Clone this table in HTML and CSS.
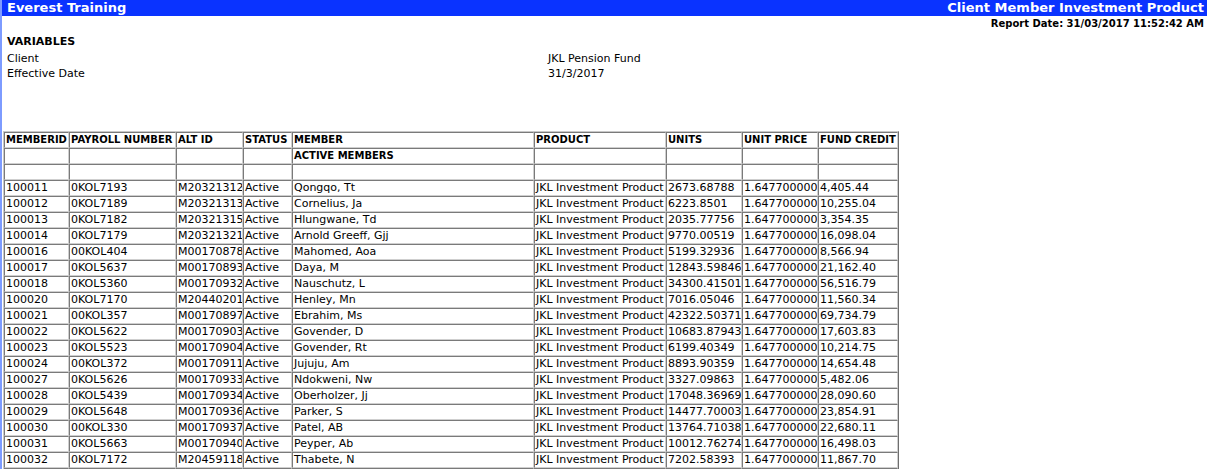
FILE: index.html
```html
<!DOCTYPE html>
<html>
<head>
<meta charset="utf-8">
<title>Client Member Investment Product</title>
<link rel="stylesheet" href="styles.css">
</head>
<body>
<div class="page">
  <div class="titlebar">
    <span class="title-left">Everest Training</span>
    <span class="title-right">Client Member Investment Product</span>
  </div>
  <div class="report-date">Report Date: 31/03/2017 11:52:42 AM</div>
  <div class="variables">
    <div class="var-head">VARIABLES</div>
    <div class="var-row"><span class="var-name">Client</span><span class="var-val">JKL Pension Fund</span></div>
    <div class="var-row"><span class="var-name">Effective Date</span><span class="var-val">31/3/2017</span></div>
  </div>
  <table class="grid">
    <thead>
      <tr class="head">
        <td class="c1">MEMBERID</td><td class="c2">PAYROLL NUMBER</td><td class="c3">ALT ID</td><td class="c4">STATUS</td><td class="c5">MEMBER</td><td class="c6">PRODUCT</td><td class="c7">UNITS</td><td class="c8">UNIT PRICE</td><td class="c9">FUND CREDIT</td>
      </tr>
    </thead>
    <tbody>
      <tr class="head"><td></td><td></td><td></td><td></td><td>ACTIVE MEMBERS</td><td></td><td></td><td></td><td></td></tr>
      <tr><td></td><td></td><td></td><td></td><td></td><td></td><td></td><td></td><td></td></tr>
      <tr><td>100011</td><td>0KOL7193</td><td>M20321312</td><td>Active</td><td>Qongqo, Tt</td><td>JKL Investment Product</td><td>2673.68788</td><td>1.647700000</td><td>4,405.44</td></tr>
      <tr><td>100012</td><td>0KOL7189</td><td>M20321313</td><td>Active</td><td>Cornelius, Ja</td><td>JKL Investment Product</td><td>6223.8501</td><td>1.647700000</td><td>10,255.04</td></tr>
      <tr><td>100013</td><td>0KOL7182</td><td>M20321315</td><td>Active</td><td>Hlungwane, Td</td><td>JKL Investment Product</td><td>2035.77756</td><td>1.647700000</td><td>3,354.35</td></tr>
      <tr><td>100014</td><td>0KOL7179</td><td>M20321321</td><td>Active</td><td>Arnold Greeff, Gjj</td><td>JKL Investment Product</td><td>9770.00519</td><td>1.647700000</td><td>16,098.04</td></tr>
      <tr><td>100016</td><td>00KOL404</td><td>M00170878</td><td>Active</td><td>Mahomed, Aoa</td><td>JKL Investment Product</td><td>5199.32936</td><td>1.647700000</td><td>8,566.94</td></tr>
      <tr><td>100017</td><td>0KOL5637</td><td>M00170893</td><td>Active</td><td>Daya, M</td><td>JKL Investment Product</td><td>12843.59846</td><td>1.647700000</td><td>21,162.40</td></tr>
      <tr><td>100018</td><td>0KOL5360</td><td>M00170932</td><td>Active</td><td>Nauschutz, L</td><td>JKL Investment Product</td><td>34300.41501</td><td>1.647700000</td><td>56,516.79</td></tr>
      <tr><td>100020</td><td>0KOL7170</td><td>M20440201</td><td>Active</td><td>Henley, Mn</td><td>JKL Investment Product</td><td>7016.05046</td><td>1.647700000</td><td>11,560.34</td></tr>
      <tr><td>100021</td><td>00KOL357</td><td>M00170897</td><td>Active</td><td>Ebrahim, Ms</td><td>JKL Investment Product</td><td>42322.50371</td><td>1.647700000</td><td>69,734.79</td></tr>
      <tr><td>100022</td><td>0KOL5622</td><td>M00170903</td><td>Active</td><td>Govender, D</td><td>JKL Investment Product</td><td>10683.87943</td><td>1.647700000</td><td>17,603.83</td></tr>
      <tr><td>100023</td><td>0KOL5523</td><td>M00170904</td><td>Active</td><td>Govender, Rt</td><td>JKL Investment Product</td><td>6199.40349</td><td>1.647700000</td><td>10,214.75</td></tr>
      <tr><td>100024</td><td>00KOL372</td><td>M00170911</td><td>Active</td><td>Jujuju, Am</td><td>JKL Investment Product</td><td>8893.90359</td><td>1.647700000</td><td>14,654.48</td></tr>
      <tr><td>100027</td><td>0KOL5626</td><td>M00170933</td><td>Active</td><td>Ndokweni, Nw</td><td>JKL Investment Product</td><td>3327.09863</td><td>1.647700000</td><td>5,482.06</td></tr>
      <tr><td>100028</td><td>0KOL5439</td><td>M00170934</td><td>Active</td><td>Oberholzer, Jj</td><td>JKL Investment Product</td><td>17048.36969</td><td>1.647700000</td><td>28,090.60</td></tr>
      <tr><td>100029</td><td>0KOL5648</td><td>M00170936</td><td>Active</td><td>Parker, S</td><td>JKL Investment Product</td><td>14477.70003</td><td>1.647700000</td><td>23,854.91</td></tr>
      <tr><td>100030</td><td>00KOL330</td><td>M00170937</td><td>Active</td><td>Patel, AB</td><td>JKL Investment Product</td><td>13764.71038</td><td>1.647700000</td><td>22,680.11</td></tr>
      <tr><td>100031</td><td>0KOL5663</td><td>M00170940</td><td>Active</td><td>Peyper, Ab</td><td>JKL Investment Product</td><td>10012.76274</td><td>1.647700000</td><td>16,498.03</td></tr>
      <tr><td>100032</td><td>0KOL7172</td><td>M20459118</td><td>Active</td><td>Thabete, N</td><td>JKL Investment Product</td><td>7202.58393</td><td>1.647700000</td><td>11,867.70</td></tr>
      <tr><td>&nbsp;</td><td></td><td></td><td></td><td></td><td></td><td></td><td></td><td></td></tr>
    </tbody>
  </table>
</div>
</body>
</html>
```

FILE: styles.css
```css
html, body {
  margin: 0;
  padding: 0;
  background: #ffffff;
}

body {
  font-family: "DejaVu Sans", Verdana, sans-serif;
  font-size: 11px;
  color: #000000;
  overflow: hidden;
}

.page {
  border-left: 2px solid #7d9bff;
  min-height: 469px;
  box-sizing: border-box;
  padding-right: 4px;
}

.titlebar {
  background: #0a33ff;
  color: #ffffff;
  font-weight: bold;
  font-size: 13px;
  height: 16px;
  line-height: 16px;
  display: flex;
  justify-content: space-between;
  padding: 0 3px 0 5px;
}

.report-date {
  text-align: right;
  font-weight: bold;
  font-size: 10px;
  line-height: 14px;
  padding: 1px 3px 0 0;
}

.variables {
  padding: 4px 0 0 5px;
  height: 100px;
  box-sizing: border-box;
}

.var-head {
  font-weight: bold;
  font-size: 11px;
  line-height: 14px;
  margin-bottom: 2px;
}

.var-row {
  display: flex;
  line-height: 15px;
}

.var-name {
  width: 541px;
}

.grid {
  margin-left: 1px;
  border-collapse: separate;
  border-spacing: 0;
  table-layout: fixed;
  width: 896px;
  border-top: 1px solid #c8c8c8;
  border-left: 1px solid #c8c8c8;
  border-right: 1px solid #6e6e6e;
  border-bottom: 1px solid #6e6e6e;
}

.grid td {
  box-sizing: border-box;
  height: 16px;
  padding: 0 0 0 1px;
  line-height: 14px;
  white-space: nowrap;
  overflow: hidden;
  border-top: 1px solid #7a7a7a;
  border-left: 1px solid #7a7a7a;
  border-right: 1px solid #cfcfcf;
  border-bottom: 1px solid #cfcfcf;
  vertical-align: middle;
}

.grid .head td {
  font-weight: bold;
  font-size: 10px;
}

.c1 { width: 65px; }
.c2 { width: 107px; }
.c3 { width: 67px; }
.c4 { width: 49px; }
.c5 { width: 242px; }
.c6 { width: 132px; }
.c7 { width: 76px; }
.c8 { width: 76px; }
.c9 { width: 80px; }
```
